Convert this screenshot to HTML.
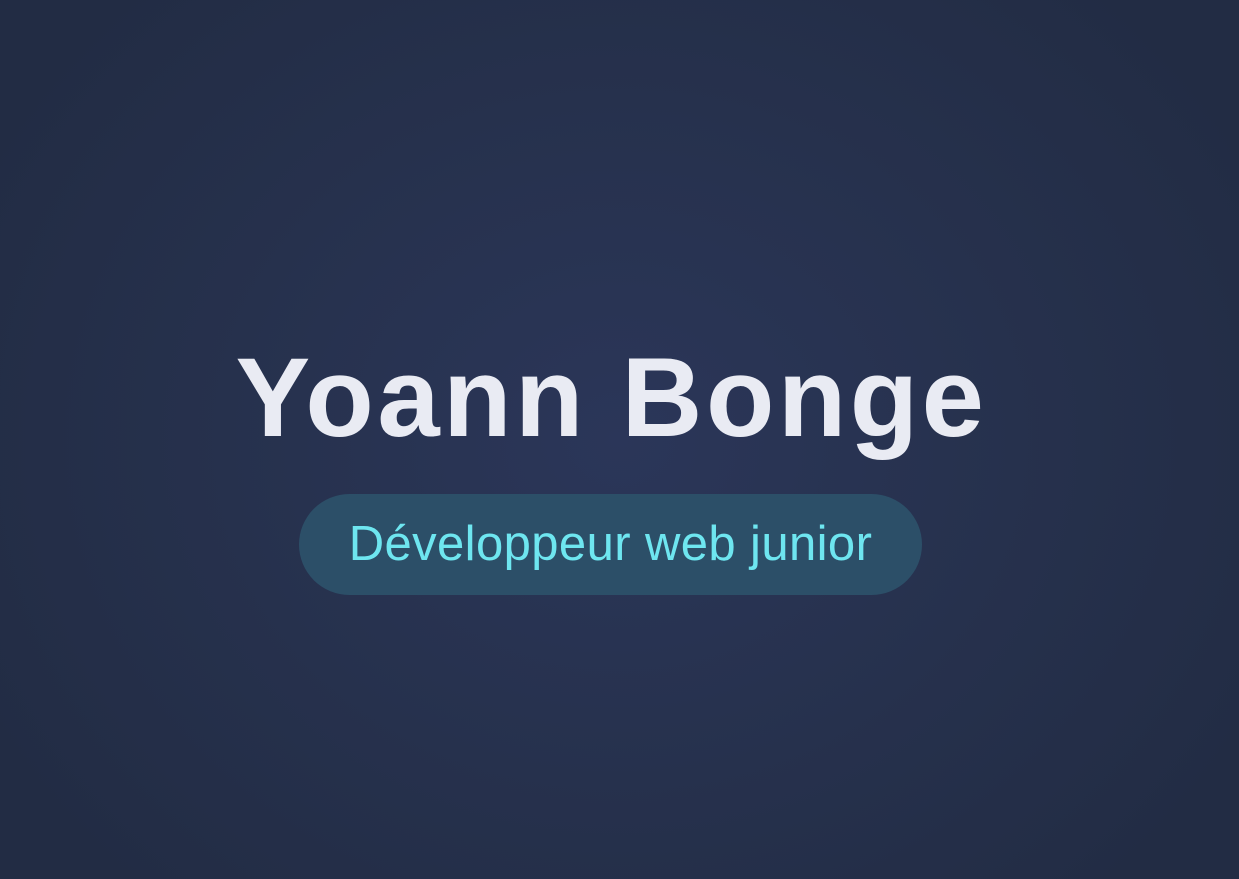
<!DOCTYPE html>
<html><head><meta charset="utf-8"><style>
html,body{margin:0;padding:0;width:1239px;height:879px;overflow:hidden}
body{background:radial-gradient(ellipse 720px 620px at 620px 440px,#2b3659 0%,#27324f 45%,#222c44 100%);font-family:"Liberation Sans",sans-serif;position:relative}
h1{position:absolute;left:-8px;width:1239px;top:338px;margin:0;text-align:center;font-size:112px;font-weight:700;color:#e9ebf3;letter-spacing:3.5px;line-height:120px}
.pill{position:absolute;left:299px;top:494px;width:623px;height:101px;border-radius:51px;background:#2c4f68;color:#6ee6f0;font-size:49px;text-align:center;line-height:101px;letter-spacing:0.4px}
</style></head><body>
<h1>Yoann Bonge</h1>
<div class="pill">Développeur web junior</div>
</body></html>
